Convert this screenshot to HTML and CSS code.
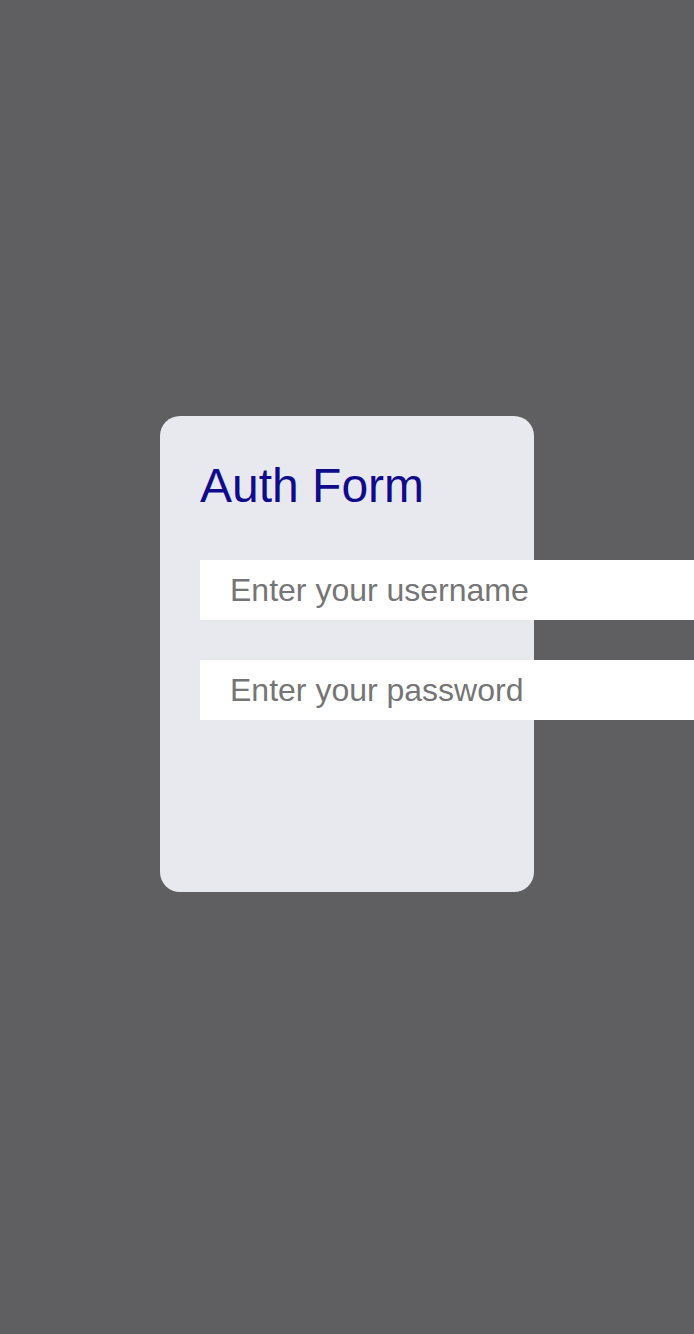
FILE: index.html
```html
<!DOCTYPE html>
<html lang="en">
<head>
<meta charset="utf-8">
<title>Auth Form</title>
<link rel="stylesheet" href="styles.css">
</head>
<body>
  <form class="card">
    <h1 class="title">Auth Form</h1>
    <input class="field" type="text" placeholder="Enter your username">
    <input class="field" type="password" placeholder="Enter your password">
  </form>
</body>
</html>
```

FILE: styles.css
```css
html, body {
  margin: 0;
  padding: 0;
}
body {
  background: #5f5f61;
  min-height: 1334px;
  box-sizing: border-box;
  padding-bottom: 26px;
  display: flex;
  flex-direction: column;
  justify-content: center;
  align-items: center;
  overflow: hidden;
  font-family: "Liberation Sans", Arial, sans-serif;
}
.card {
  box-sizing: border-box;
  width: 374px;
  height: 476px;
  background: #e8e9ef;
  border-radius: 20px;
  padding: 40px;
  display: flex;
  flex-direction: column;
  align-items: flex-start;
}
.title {
  margin: 0 0 44px 0;
  font-size: 48px;
  line-height: 60px;
  font-weight: normal;
  color: #100b8b;
}
.field {
  box-sizing: border-box;
  flex: none;
  width: 520px;
  height: 60px;
  margin: 0 0 40px 0;
  padding: 0 30px;
  border: none;
  outline: none;
  background: #ffffff;
  font-family: "Liberation Sans", Arial, sans-serif;
  font-size: 32px;
  color: #333;
}
.field::placeholder {
  color: #757575;
  opacity: 1;
}
```
